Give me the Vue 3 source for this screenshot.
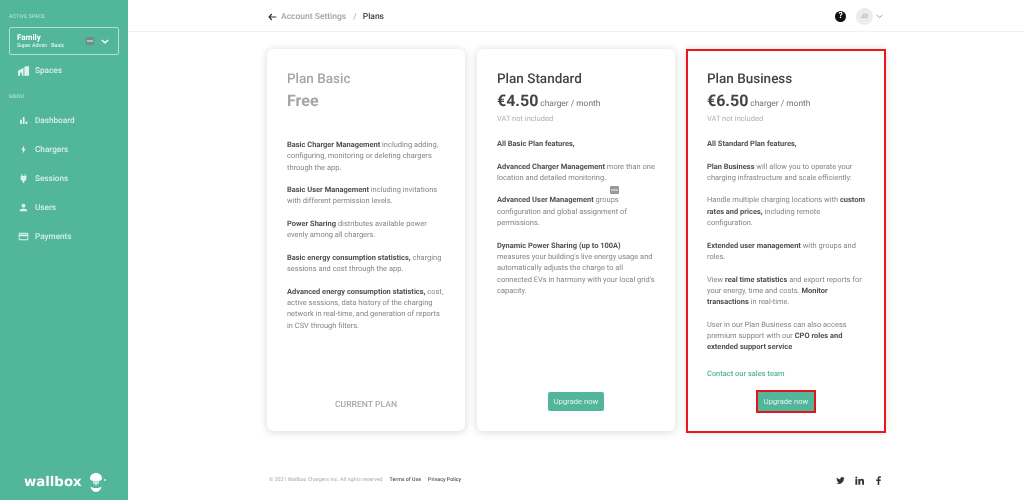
<script setup>
const menu = [
  { label: "Dashboard", icon: "M3 13h2.500V7H3zM7 13h2.500V3H7zM11 13h2.500V9.500H11z" },
  { label: "Chargers", icon: "M9.200 1.500 4.800 9h2.600L6.600 14.500 11.200 6.800H8.500z" },
  { label: "Sessions", icon: "M5 1.500h1.300v3h3.400v-3H11v3h1.200v3.600c0 2-1.400 3.500-3.200 3.800v2.600H7v-2.600c-1.800-.3-3.200-1.800-3.200-3.800V4.500H5z" },
  { label: "Users", icon: "M8 2.500a2.800 2.800 0 1 1 0 5.600 2.800 2.800 0 0 1 0-5.600zM2.500 13.500v-1.300c0-1.900 3.700-2.900 5.500-2.900s5.500 1 5.500 2.900v1.300z" },
  { label: "Payments", icon: "M2.500 2.500h11a1.500 1.500 0 0 1 1.500 1.500v8a1.500 1.500 0 0 1-1.500 1.500h-11A1.500 1.500 0 0 1 1 12V4a1.500 1.500 0 0 1 1.500-1.500zM2.300 5.200h11.400V3.900H2.300zM2.300 7.800v4.300h11.400V7.800z" },
];

const basic = [
  [["b", "Basic Charger Management"], ["", " including adding, configuring, monitoring or deleting chargers through the app."]],
  [["b", "Basic User Management"], ["", " including invitations with different permission levels."]],
  [["b", "Power Sharing"], ["", " distributes available power evenly among all chargers."]],
  [["b", "Basic energy consumption statistics,"], ["", " charging sessions and cost through the app."]],
  [["b", "Advanced energy consumption statistics,"], ["", " cost, active sessions, data history of the charging network in real-time, and generation of reports in CSV through filters."]],
];

const standard = [
  [["b", "All Basic Plan features,"]],
  [["b", "Advanced Charger Management"], ["", " more than one location and detailed monitoring."]],
  [["b", "Advanced User Management"], ["", " groups configuration and global assignment of permissions."]],
  [["b", "Dynamic Power Sharing (up to 100A)"], ["", " measures your building's live energy usage and automatically adjusts the charge to all connected EVs in harmony with your local grid's capacity."]],
];

const business = [
  [["b", "All Standard Plan features,"]],
  [["b", "Plan Business"], ["", " will allow you to operate your charging infrastructure and scale efficiently:"]],
  [["", "Handle multiple charging locations with "], ["b", "custom rates and prices,"], ["", " including remote configuration."]],
  [["b", "Extended user management"], ["", " with groups and roles."]],
  [["", "View "], ["b", "real time statistics"], ["", " and export reports for your energy, time and costs. "], ["b", "Monitor transactions"], ["", " in real-time."]],
  [["", "User in our Plan Business can also access premium support with our "], ["b", "CPO roles and extended support service"]],
];
</script>

<template>
  <div class="page">
    <aside class="sidebar">
      <div class="section-label">ACTIVE SPACE</div>
      <div class="space-box">
        <div class="space-text">
          <div class="space-name">Family</div>
          <div class="space-role">Super Admin · Basic</div>
        </div>
        <span class="tiny-badge"></span>
        <svg class="chevron" viewBox="0 0 10 6" width="8" height="5">
          <path d="M1 1l4 3.600L9 1" fill="none" stroke="#fff" stroke-width="1.600" />
        </svg>
      </div>
      <div class="nav-item spaces">
        <svg viewBox="0 0 16 14" width="11" height="10">
          <path fill="#dff3ed" d="M0 6.500 8 2.200V14H5.600V9.500H3V14H0zM9.200 1.200 11.500 0 16 0V14H9.200z" />
        </svg>
        <span>Spaces</span>
      </div>
      <div class="section-label menu-label">MENU</div>
      <nav class="menu">
        <div v-for="item in menu" :key="item.label" class="nav-item">
          <svg viewBox="0 0 16 16" width="11" height="11">
            <path fill="#dff3ed" fill-rule="evenodd" :d="item.icon" />
          </svg>
          <span>{{ item.label }}</span>
        </div>
      </nav>
      <div class="logo">
        <span class="logo-text">wallbox</span>
        <svg viewBox="0 0 12 19" width="12" height="19">
          <path fill="#fff" d="M6 0c3.300 0 6 2.300 6 5.200 0 1.500-1 2.500-2.300 2.500H8.700v3.300H7.500V7.700h-.8v4.500H5.300V7.700h-.8v3.300H3.300V7.700h-1C1 7.700 0 6.700 0 5.200 0 2.300 2.700 0 6 0z" />
          <path fill="#fff" d="M.6 13.600c1.500 1 3.400 1.500 5.400 1.500s3.900-.5 5.400-1.500C11.200 16.700 8.800 19 6 19S.8 16.700.6 13.600z" />
        </svg>
        <span class="logo-dot"></span>
      </div>
    </aside>

    <div class="content">
      <header class="topbar">
        <div class="crumbs">
          <svg viewBox="0 0 12 10" width="9" height="8">
            <path d="M5 1 1.500 5 5 9M1.500 5H11" fill="none" stroke="#333" stroke-width="1.600" />
          </svg>
          <span class="crumb-link">Account Settings</span>
          <span class="crumb-sep">/</span>
          <span class="crumb-now">Plans</span>
        </div>
        <div class="top-right">
          <span class="help">?</span>
          <span class="avatar">JD</span>
          <svg viewBox="0 0 10 6" width="7" height="5">
            <path d="M1 1l4 3.600L9 1" fill="none" stroke="#9a9a9a" stroke-width="1.400" />
          </svg>
        </div>
      </header>

      <main class="plans">
        <section class="card">
          <h2 class="title muted">Plan Basic</h2>
          <div class="price muted">Free</div>
          <div class="features basic-features">
            <p v-for="(para, i) in basic" :key="i">
              <template v-for="(part, j) in para" :key="j"><b v-if="part[0]">{{ part[1] }}</b><template v-else>{{ part[1] }}</template></template>
            </p>
          </div>
          <div class="card-foot">
            <span class="current">CURRENT PLAN</span>
          </div>
        </section>

        <section class="card">
          <h2 class="title">Plan Standard</h2>
          <div class="price">€4.50<small>charger / month</small></div>
          <div class="vat">VAT not included</div>
          <div class="features">
            <p v-for="(para, i) in standard" :key="i">
              <template v-for="(part, j) in para" :key="j"><b v-if="part[0]">{{ part[1] }}</b><template v-else>{{ part[1] }}</template></template>
            </p>
          </div>
          <span class="float-badge"></span>
          <div class="card-foot">
            <button class="upgrade">Upgrade now</button>
          </div>
        </section>

        <section class="card marked">
          <h2 class="title">Plan Business</h2>
          <div class="price">€6.50<small>charger / month</small></div>
          <div class="vat">VAT not included</div>
          <div class="features">
            <p v-for="(para, i) in business" :key="i">
              <template v-for="(part, j) in para" :key="j"><b v-if="part[0]">{{ part[1] }}</b><template v-else>{{ part[1] }}</template></template>
            </p>
          </div>
          <a class="contact">Contact our sales team</a>
          <div class="card-foot">
            <button class="upgrade marked-btn">Upgrade now</button>
          </div>
        </section>
      </main>

      <footer class="footer">
        <div class="legal">
          <span>© 2021 Wallbox Chargers Inc. All rights reserved</span>
          <b>Terms of Use</b>
          <b>Privacy Policy</b>
        </div>
        <div class="social">
          <svg viewBox="0 0 24 24" width="9" height="9">
            <path fill="#333" d="M23 5c-.8.4-1.700.6-2.600.7 1-.6 1.700-1.500 2-2.500-.9.500-1.900.9-2.900 1.100a4.600 4.600 0 0 0-7.800 4.200C7.900 8.300 4.500 6.500 2.300 3.700c-1.200 2.100-.6 4.800 1.400 6.100-.7 0-1.400-.2-2-.6 0 2.200 1.500 4.100 3.700 4.600-.7.200-1.400.2-2.100.1.600 1.900 2.300 3.200 4.300 3.200A9.300 9.300 0 0 1 1 19a13 13 0 0 0 20-11.700c.9-.6 1.600-1.400 2-2.300z" />
          </svg>
          <svg viewBox="0 0 24 24" width="9" height="9">
            <path fill="#333" d="M1 8h5v15H1zM3.500 1a2.700 2.700 0 1 1 0 5.400 2.700 2.700 0 0 1 0-5.400zM9 8h4.800v2.100c.7-1.300 2.300-2.500 4.600-2.500 4.900 0 5.600 3.200 5.600 7.400V23h-5v-7c0-1.700 0-3.900-2.300-3.900s-2.700 1.800-2.700 3.800V23H9z" />
          </svg>
          <svg viewBox="0 0 24 24" width="9" height="9">
            <path fill="#333" d="M14 24V13.500h3.600l.6-4.200H14V6.700c0-1.200.4-2 2.100-2h2.200V.9C17.900.9 16.600.8 15.100.8c-3.200 0-5.400 2-5.400 5.500v3H6v4.200h3.700V24z" />
          </svg>
        </div>
      </footer>
    </div>
  </div>
</template>

<style scoped>
.page {
  display: flex;
  width: 1024px;
  height: 500px;
  overflow: hidden;
  background: #fff;
  font-family: Roboto, "Liberation Sans", sans-serif;
  text-rendering: geometricPrecision;
  filter: blur(0.3px);
}

.sidebar {
  width: 128px;
  flex-shrink: 0;
  display: flex;
  flex-direction: column;
  background: #52b69a;
  color: #d8f0e9;
  padding: 14px 9px 0;
  box-sizing: border-box;
}

.section-label {
  font-size: 5.400px;
  line-height: 6px;
  color: #bfe4d9;
}

.space-box {
  display: flex;
  align-items: center;
  height: 28px;
  margin-top: 7px;
  padding: 0 9px 0 7px;
  border: 1px solid #b5e0d4;
  border-radius: 2px;
  box-sizing: border-box;
}

.space-text {
  flex: 1;
}

.space-name {
  font-size: 8px;
  line-height: 10px;
  font-weight: 700;
  color: #fff;
}

.space-role {
  font-size: 5.300px;
  line-height: 7px;
  color: #fff;
}

.tiny-badge {
  position: relative;
  width: 8px;
  height: 8px;
  margin-right: 7px;
  background: #6d8f86;
  border-radius: 1px;
}

.tiny-badge::after,
.float-badge::after {
  content: "";
  position: absolute;
  left: 1px;
  right: 1px;
  top: 3px;
  height: 2px;
  background: rgba(255, 255, 255, 0.45);
}

.nav-item {
  display: flex;
  align-items: center;
  gap: 6px;
  height: 29px;
  padding-left: 9px;
  font-size: 8.200px;
  font-weight: 500;
}

.nav-item svg {
  flex-shrink: 0;
}

.spaces {
  height: 32px;
}

.menu-label {
  margin-top: 7px;
}

.menu {
  margin-top: 6px;
}

.logo {
  display: flex;
  align-items: center;
  gap: 8px;
  margin-top: auto;
  margin-bottom: 8px;
  padding-left: 15px;
  color: #fff;
}

.logo-text {
  font-family: "DejaVu Sans", sans-serif;
  font-size: 13.300px;
  font-weight: 700;
}

.logo-dot {
  width: 2px;
  height: 2px;
  margin: -6px 0 0 -6px;
  border-radius: 50%;
  background: #d8f0e9;
}

.content {
  flex: 1;
  display: flex;
  flex-direction: column;
  min-width: 0;
}

.topbar {
  display: flex;
  align-items: center;
  justify-content: space-between;
  height: 32px;
  padding: 2px 141px 0 140px;
  border-bottom: 1px solid #f1f1f1;
  box-sizing: border-box;
}

.crumbs {
  display: flex;
  align-items: center;
  font-size: 8.500px;
}

.crumb-link {
  margin-left: 4px;
  color: #a3a3a3;
  font-weight: 500;
}

.crumb-sep {
  margin: 0 6px 0 7px;
  color: #a3a3a3;
}

.crumb-now {
  color: #3d3d3d;
  font-weight: 500;
}

.top-right {
  display: flex;
  align-items: center;
}

.help {
  width: 11px;
  height: 11px;
  margin-right: 10px;
  border-radius: 50%;
  background: #111;
  color: #fff;
  font-size: 8.500px;
  line-height: 11px;
  font-weight: 700;
  text-align: center;
}

.avatar {
  width: 17px;
  height: 17px;
  margin-right: 3px;
  border-radius: 50%;
  background: #ececec;
  color: #b5b5b5;
  font-size: 6px;
  line-height: 17px;
  font-weight: 700;
  text-align: center;
}

.plans {
  display: flex;
  gap: 12px;
  margin: 17px 0 0 139px;
}

.card {
  position: relative;
  display: flex;
  flex-direction: column;
  width: 198px;
  height: 382px;
  padding: 22px 20px 20px;
  box-sizing: border-box;
  border-radius: 6px;
  background: #fff;
  box-shadow: 0 1px 8px rgba(0, 0, 0, 0.16);
  color: #858585;
}

.card.marked {
  border-radius: 0;
}

.card.marked::after {
  content: "";
  position: absolute;
  left: -1px;
  right: -1px;
  top: 0;
  bottom: -2px;
  border: 2px solid #f0141c;
  pointer-events: none;
}

.title {
  margin: 0;
  font-size: 13.500px;
  line-height: 17px;
  font-weight: 500;
  color: #444;
}

.price {
  margin-top: 3px;
  font-size: 16px;
  line-height: 20px;
  font-weight: 700;
  color: #444;
}

.price small {
  margin-left: 2px;
  font-size: 8.400px;
  font-weight: 400;
  color: #707070;
}

.card .muted {
  color: #a5a5a5;
}

.vat {
  font-size: 7.500px;
  line-height: 10px;
  color: #b0b0b0;
}

.features {
  margin-top: 14px;
  font-size: 7.470px;
  line-height: 11.300px;
}

.basic-features {
  margin-top: 28px;
}

.features p {
  margin: 0 0 11.300px;
}

.features b {
  font-weight: 700;
  color: #505050;
}

.float-badge {
  position: absolute;
  left: 133px;
  top: 137px;
  width: 9px;
  height: 8px;
  border-radius: 1px;
  background: #999;
}

.contact {
  margin-top: 4px;
  font-size: 7.470px;
  line-height: 11px;
  font-weight: 500;
  color: #52b69a;
}

.card-foot {
  display: flex;
  justify-content: center;
  margin-top: auto;
}

.current {
  font-size: 8.600px;
  line-height: 12px;
  font-weight: 500;
  color: #a9a9a9;
}

.upgrade {
  width: 56px;
  height: 19px;
  padding: 0;
  border: 0;
  border-radius: 2px;
  background: #52b69a;
  color: #e6f5f0;
  font-family: inherit;
  font-size: 7.600px;
}

.marked-btn {
  outline: 2px solid #e3141d;
  border-radius: 0;
}

.footer {
  display: flex;
  align-items: center;
  justify-content: space-between;
  height: 18px;
  margin-top: 40px;
  padding: 0 141px;
}

.legal {
  display: flex;
  gap: 7px;
  font-size: 5.300px;
  color: #a9a9a9;
}

.legal b {
  font-weight: 500;
  color: #555;
}

.social {
  display: flex;
  gap: 10px;
}
</style>
